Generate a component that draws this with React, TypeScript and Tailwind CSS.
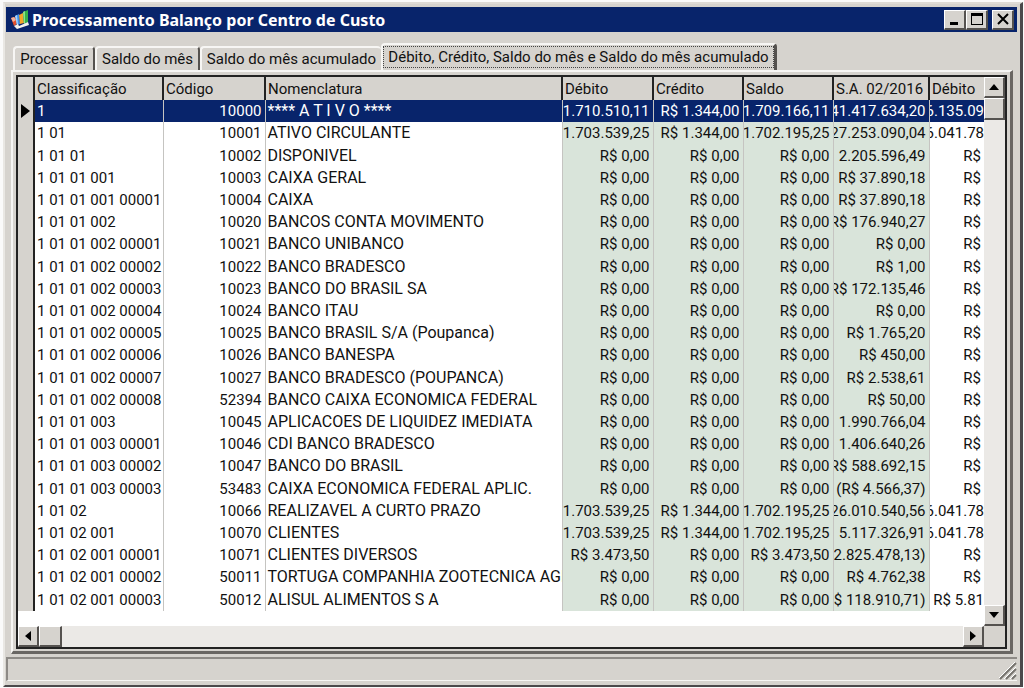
import { clsx } from 'clsx';

type Row = {
  classification: string;
  code: string;
  name: string;
  values: string[];
};

const tabs = [
  { label: 'Processar', width: 'w-[82px]' },
  { label: 'Saldo do mês', width: 'w-[105px]' },
  { label: 'Saldo do mês acumulado', width: 'w-[181px]' },
  { label: 'Débito, Crédito, Saldo do mês e Saldo do mês acumulado', width: 'w-[396px]' },
];

const columns = [
  { label: 'Classificação', width: 'w-[129px]' },
  { label: 'Código', width: 'w-[102px]' },
  { label: 'Nomenclatura', width: '' },
  { label: 'Débito', width: 'w-[91px]' },
  { label: 'Crédito', width: 'w-[90px]' },
  { label: 'Saldo', width: 'w-[90px]' },
  { label: 'S.A. 02/2016', width: 'w-[96px]' },
  { label: 'Débito', width: 'w-[55px]' },
];

const zero = 'R$ 0,00';

const rows: Row[] = [
  { classification: '1', code: '10000', name: '**** A T I V O ****', values: ['1.710.510,11', 'R$ 1.344,00', '1.709.166,11', '41.417.634,20', '6.135.09'] },
  { classification: '1 01', code: '10001', name: 'ATIVO CIRCULANTE', values: ['1.703.539,25', 'R$ 1.344,00', '1.702.195,25', '27.253.090,04', '6.041.78'] },
  { classification: '1 01 01', code: '10002', name: 'DISPONIVEL', values: [zero, zero, zero, '2.205.596,49', 'R$'] },
  { classification: '1 01 01 001', code: '10003', name: 'CAIXA GERAL', values: [zero, zero, zero, 'R$ 37.890,18', 'R$'] },
  { classification: '1 01 01 001 00001', code: '10004', name: 'CAIXA', values: [zero, zero, zero, 'R$ 37.890,18', 'R$'] },
  { classification: '1 01 01 002', code: '10020', name: 'BANCOS CONTA MOVIMENTO', values: [zero, zero, zero, 'R$ 176.940,27', 'R$'] },
  { classification: '1 01 01 002 00001', code: '10021', name: 'BANCO UNIBANCO', values: [zero, zero, zero, zero, 'R$'] },
  { classification: '1 01 01 002 00002', code: '10022', name: 'BANCO BRADESCO', values: [zero, zero, zero, 'R$ 1,00', 'R$'] },
  { classification: '1 01 01 002 00003', code: '10023', name: 'BANCO DO BRASIL SA', values: [zero, zero, zero, 'R$ 172.135,46', 'R$'] },
  { classification: '1 01 01 002 00004', code: '10024', name: 'BANCO ITAU', values: [zero, zero, zero, zero, 'R$'] },
  { classification: '1 01 01 002 00005', code: '10025', name: 'BANCO BRASIL S/A (Poupanca)', values: [zero, zero, zero, 'R$ 1.765,20', 'R$'] },
  { classification: '1 01 01 002 00006', code: '10026', name: 'BANCO BANESPA', values: [zero, zero, zero, 'R$ 450,00', 'R$'] },
  { classification: '1 01 01 002 00007', code: '10027', name: 'BANCO BRADESCO (POUPANCA)', values: [zero, zero, zero, 'R$ 2.538,61', 'R$'] },
  { classification: '1 01 01 002 00008', code: '52394', name: 'BANCO CAIXA ECONOMICA FEDERAL', values: [zero, zero, zero, 'R$ 50,00', 'R$'] },
  { classification: '1 01 01 003', code: '10045', name: 'APLICACOES DE LIQUIDEZ IMEDIATA', values: [zero, zero, zero, '1.990.766,04', 'R$'] },
  { classification: '1 01 01 003 00001', code: '10046', name: 'CDI BANCO BRADESCO', values: [zero, zero, zero, '1.406.640,26', 'R$'] },
  { classification: '1 01 01 003 00002', code: '10047', name: 'BANCO DO BRASIL', values: [zero, zero, zero, 'R$ 588.692,15', 'R$'] },
  { classification: '1 01 01 003 00003', code: '53483', name: 'CAIXA ECONOMICA FEDERAL APLIC.', values: [zero, zero, zero, '(R$ 4.566,37)', 'R$'] },
  { classification: '1 01 02', code: '10066', name: 'REALIZAVEL A CURTO PRAZO', values: ['1.703.539,25', 'R$ 1.344,00', '1.702.195,25', '26.010.540,56', '6.041.78'] },
  { classification: '1 01 02 001', code: '10070', name: 'CLIENTES', values: ['1.703.539,25', 'R$ 1.344,00', '1.702.195,25', '5.117.326,91', '6.041.78'] },
  { classification: '1 01 02 001 00001', code: '10071', name: 'CLIENTES DIVERSOS', values: ['R$ 3.473,50', zero, 'R$ 3.473,50', '2.825.478,13)', 'R$'] },
  { classification: '1 01 02 001 00002', code: '50011', name: 'TORTUGA COMPANHIA ZOOTECNICA AGR', values: [zero, zero, zero, 'R$ 4.762,38', 'R$'] },
  { classification: '1 01 02 001 00003', code: '50012', name: 'ALISUL ALIMENTOS S A', values: [zero, zero, zero, '$ 118.910,71)', 'R$ 5.81'] },
];

const raised = 'border-t border-l border-r-2 border-b-2 border-t-white border-l-white border-r-[#55524f] border-b-[#55524f] bg-[#d6d3ce]';

function AppIcon() {
  return (
    <svg viewBox="0 0 20 20" className="size-5 shrink-0" aria-hidden="true">
      <path d="M1 8 L5 7 L8 13 L4 16 Z" fill="#e5502b" />
      <path d="M1 8 L4 7 L6 10 L3 12 Z" fill="#f5b49c" />
      <path d="M5 6 L9 4 L10 14 L7 15 Z" fill="#3f91ea" />
      <path d="M5 6 L7 5 L8 15 L7 15 Z" fill="#a5d5ff" />
      <path d="M9 5 L13 3 L14 13 L10 14 Z" fill="#f5a629" />
      <path d="M13 2 L18 0 L18 12 L14 14 Z" fill="#35b34a" />
      <path d="M13 2 L15 1 L15 13 L14 14 Z" fill="#8be387" />
      <path d="M4 16 L8 14 L9 16 L18 12 L19 15 L7 19 Z" fill="#f4f2ee" />
    </svg>
  );
}

function Arrow({ points }: { points: string }) {
  return (
    <svg viewBox="0 0 10 10" className="size-2.5" aria-hidden="true">
      <polygon points={points} fill="#000" />
    </svg>
  );
}

function TitleBar() {
  const button = clsx('flex h-5 w-[22px] items-center justify-center', raised);
  return (
    <header className="flex h-[25px] shrink-0 items-center bg-[#08246b] pr-[3px] pl-1">
      <AppIcon />
      <h1 className="ml-0.5 flex-1 truncate font-['Noto_Sans',sans-serif] text-base leading-6 font-bold text-white">
        Processamento Balanço por Centro de Custo
      </h1>
      <button aria-label="Minimizar" className={button}>
        <svg viewBox="0 0 14 14" className="size-3.5"><path d="M2 10h8v3H2z" /></svg>
      </button>
      <button aria-label="Maximizar" className={button}>
        <svg viewBox="0 0 14 14" className="size-3.5"><path d="M1 1h12v12H1zM2 4v8h10V4z" fillRule="evenodd" /></svg>
      </button>
      <button aria-label="Fechar" className={clsx(button, 'ml-1')}>
        <svg viewBox="0 0 14 14" className="size-3.5"><path d="M2 2l10 10M12 2L2 12" stroke="#000" strokeWidth="2" /></svg>
      </button>
    </header>
  );
}

function Tabs() {
  return (
    <div role="tablist" className="flex h-[27px] items-end pl-0.5">
      {tabs.map((tab, idx) => {
        const active = idx === tabs.length - 1;
        return (
          <button
            key={tab.label}
            role="tab"
            aria-selected={active}
            className={clsx(
              'shrink-0 rounded-t-sm border-t-2 border-l-2 border-t-[#f7f6f4] border-l-[#f7f6f4] whitespace-nowrap',
              tab.width,
              active ? 'h-[27px] border-r-3 border-r-[#55524f] pb-0.5' : 'h-6',
              idx < 2 && 'border-r-2 border-r-[#55524f]',
            )}
          >
            <span className={clsx('block', active ? 'border border-dotted border-[#444] leading-5' : 'leading-[22px]')}>{tab.label}</span>
          </button>
        );
      })}
    </div>
  );
}

function Grid() {
  return (
    <table className="h-[534px] w-full table-fixed border-collapse">
      <thead>
        <tr className="h-[23px] bg-[#d6d3ce] text-left">
          <th className="w-4 border-r-2 border-[#222] p-0" aria-label="Linha atual" />
          {columns.map((column, idx) => (
            <th
              key={idx}
              className={clsx(
                'overflow-hidden p-0 pl-0.5 font-normal whitespace-nowrap',
                column.width,
                idx < columns.length - 1 && 'border-r-2 border-[#222]',
              )}
            >
              {column.label}
            </th>
          ))}
        </tr>
      </thead>
      <tbody>
        {rows.map((row, idx) => {
          const selected = idx === 0;
          return (
            <tr key={row.code} className={clsx('h-[22px]', selected && 'bg-[#08246b] text-white')}>
              <td className="border-r-2 border-[#222] bg-[#d6d3ce] p-0">
                {selected && (
                  <svg viewBox="0 0 9 14" className="ml-[3px] h-3.5 w-[9px]" aria-label="Selecionada">
                    <path d="M0 0L9 7L0 14z" fill="#000" />
                  </svg>
                )}
              </td>
              <td className="overflow-hidden border-r border-[#c5c4c1] p-0 pl-0.5 whitespace-nowrap">{row.classification}</td>
              <td className="border-r border-[#c5c4c1] p-0 pr-[3px] text-right">{row.code}</td>
              <td className="overflow-hidden border-r border-[#c5c4c1] p-0 pl-0.5 text-base leading-5 whitespace-nowrap">{row.name}</td>
              {row.values.map((value, col) => {
                const last = col === row.values.length - 1;
                return (
                  <td
                    key={col}
                    className={clsx('p-0', !last && 'border-r border-[#c5c4c1]', !last && !selected && 'bg-[#d9e4da]')}
                  >
                    <div className={clsx('flex justify-end overflow-hidden whitespace-nowrap', (!last || value === 'R$') && 'pr-[3px]')}>
                      {value}
                    </div>
                  </td>
                );
              })}
            </tr>
          );
        })}
      </tbody>
    </table>
  );
}

function VerticalScrollbar() {
  const button = clsx('flex h-[21px] w-full items-center justify-center', raised);
  return (
    <div className="flex w-[21px] shrink-0 flex-col bg-[#ebe9e6]">
      <button aria-label="Rolar para cima" className={button}><Arrow points="0,8 5,2 10,8" /></button>
      <div className={clsx('h-[22px]', raised)} />
      <div className="flex-1" />
      <button aria-label="Rolar para baixo" className={button}><Arrow points="0,2 5,8 10,2" /></button>
    </div>
  );
}

function HorizontalScrollbar() {
  const button = clsx('flex h-full w-[21px] items-center justify-center', raised);
  return (
    <div className="flex h-[21px]">
      <div className="flex flex-1 bg-[#ebe9e6]">
        <button aria-label="Rolar para a esquerda" className={button}><Arrow points="8,0 2,5 8,10" /></button>
        <div className={clsx('w-[23px]', raised)} />
        <div className="flex-1" />
        <button aria-label="Rolar para a direita" className={button}><Arrow points="2,0 8,5 2,10" /></button>
      </div>
      <div className="w-[21px] bg-[#d6d3ce]" />
    </div>
  );
}

function StatusBar() {
  return (
    <footer className="mt-[3px] flex h-6 items-end justify-end border-t-2 border-b border-l-2 border-t-[#8d8a86] border-b-[#f7f6f4] border-l-[#8d8a86]">
      <svg viewBox="0 0 18 18" className="size-[18px]" aria-hidden="true">
        <path d="M1 17L17 1M7 17L17 7M13 17L17 13" stroke="#77746f" strokeWidth="2" />
        <path d="M-1 17L17 -1M5 17L17 5M11 17L17 11" stroke="#fff" strokeWidth="1" />
      </svg>
    </footer>
  );
}

export default function App() {
  return (
    <div className="min-h-screen bg-[#fafafa] pt-0.5 pr-px pl-[3px] font-[Roboto,sans-serif] text-[15px] leading-5 text-[#111]">
      <div className="border-t-2 border-r-3 border-b-2 border-l-2 border-t-[#dedbd6] border-r-[#4b494b] border-b-[#4b494b] border-l-[#e9e7e3] bg-[#d6d3ce] pt-[3px] pr-[3px] pb-1 pl-px">
        <TitleBar />
        <main className="pt-[11px] pr-1 pl-[5px]">
          <Tabs />
          <div className="border-t-2 border-r-3 border-b-3 border-l-2 border-t-[#f7f6f4] border-r-[#696663] border-b-[#696663] border-l-[#f7f6f4] p-[3px] pb-0.5">
            <div className="border-2 border-[#222] bg-white">
              <div className="flex">
                <div className="min-w-0 flex-1 pb-[15px]">
                  <Grid />
                </div>
                <VerticalScrollbar />
              </div>
              <HorizontalScrollbar />
            </div>
          </div>
        </main>
        <StatusBar />
      </div>
    </div>
  );
}
